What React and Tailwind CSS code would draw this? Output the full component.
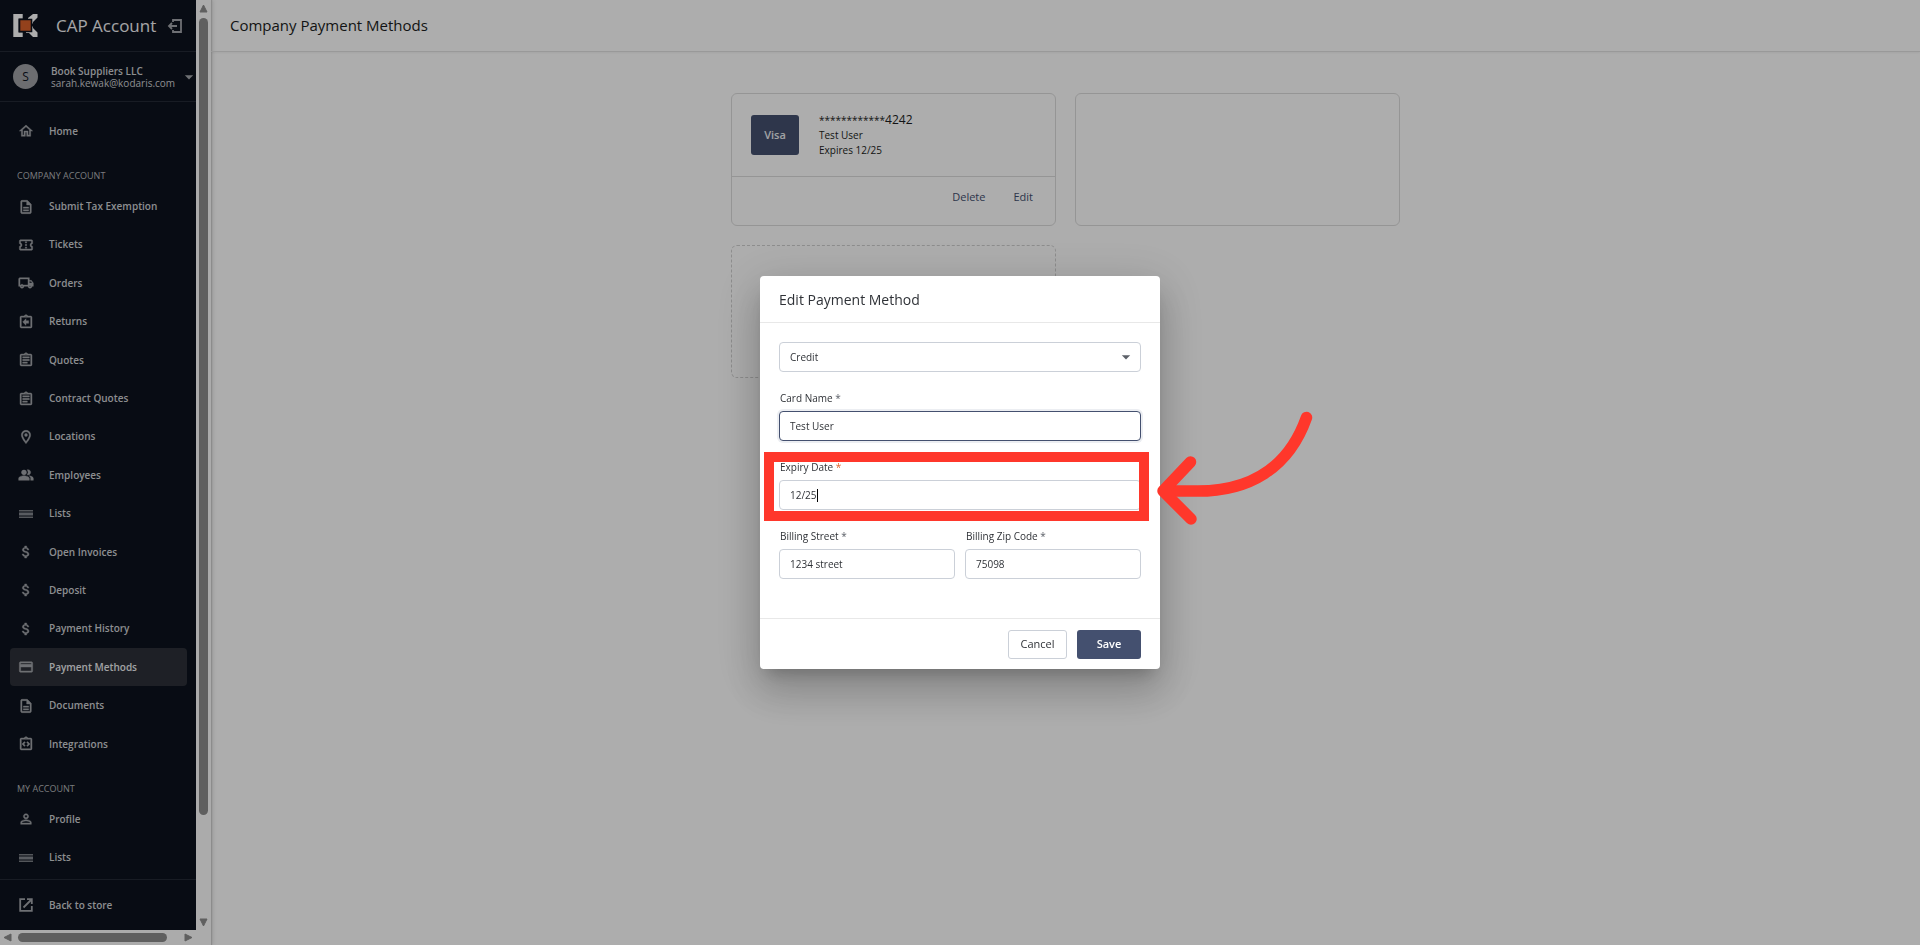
import React, { useState } from 'react';
import {
    MdOutlineHome, MdOutlineDescription, MdOutlineConfirmationNumber, MdOutlineLocalShipping, MdOutlineAssignmentReturn,
    MdOutlineAssignment, MdOutlineLocationOn, MdPeopleAlt, MdAttachMoney, MdOutlineCreditCard, MdOutlineIntegrationInstructions,
    MdPersonOutline, MdArrowDropDown,
} from 'react-icons/md';

const inputClass = "w-full h-[30px] px-[10px] rounded-[4px] bg-white border text-[10px] text-[#2f3237] focus:outline-none";
const inputBorder = "border-[#cbd0d8]";
const inputActiveBorder = "border-[#44506f] shadow-[0_0_0_2px_#eceef2]";

const ListIcon = ({ size = 16, className }) => (
    <svg width={size} height={size} viewBox="0 0 16 16" fill="currentColor" className={className}>
        <path d="M1 4h14v1.500H1zM1 10.500h14V12H1z" fillOpacity="0.75" />
        <path d="M1 6.500h14v3H1z" fillOpacity="0.8" />
    </svg>
);

const StoreIcon = ({ size = 16, className }) => (
    <svg width={size} height={size} viewBox="0 0 16 16" fill="none" stroke="currentColor" strokeWidth="1.8" className={className}>
        <path d="M7 2.2H2.2v11.6h11.6V9" />
        <path d="M9 2.2h4.8V7M13.5 2.5L5.5 10.5" />
    </svg>
);

const LogoutIcon = () => (
    <svg width="16" height="16" viewBox="0 0 16 16" fill="none" stroke="currentColor" strokeWidth="1.8">
        <path d="M6 4V2h8v12H6v-2" />
        <path d="M10 8H2M5 5L2 8l3 3" />
    </svg>
);

const Logo = () => (
    <svg width="26" height="26" viewBox="0 0 26 26">
        <path d="M1.300 1h9.400v4.500H6.500v14h4.200V24H1.300z" fill="#fff" />
        <path d="M21 1h4.500v3.500l-4.500 4.500v1.500h-2l-3-4V5zM21 24h4.500v-4.500l-4.500-4.500v-1.500h-2l-5 5V20h3z" fill="#fff" />
        <path d="M7.500 6.500h12v12h-12z" fill="#d9602a" stroke="#0d131e" strokeWidth="1.600" />
    </svg>
);

const navItems = [
    { label: 'Home', icon: MdOutlineHome },
    { heading: 'COMPANY ACCOUNT' },
    { label: 'Submit Tax Exemption', icon: MdOutlineDescription },
    { label: 'Tickets', icon: MdOutlineConfirmationNumber },
    { label: 'Orders', icon: MdOutlineLocalShipping },
    { label: 'Returns', icon: MdOutlineAssignmentReturn },
    { label: 'Quotes', icon: MdOutlineAssignment },
    { label: 'Contract Quotes', icon: MdOutlineAssignment },
    { label: 'Locations', icon: MdOutlineLocationOn },
    { label: 'Employees', icon: MdPeopleAlt },
    { label: 'Lists', icon: ListIcon },
    { label: 'Open Invoices', icon: MdAttachMoney },
    { label: 'Deposit', icon: MdAttachMoney },
    { label: 'Payment History', icon: MdAttachMoney },
    { label: 'Payment Methods', icon: MdOutlineCreditCard, active: true },
    { label: 'Documents', icon: MdOutlineDescription },
    { label: 'Integrations', icon: MdOutlineIntegrationInstructions },
    { heading: 'MY ACCOUNT' },
    { label: 'Profile', icon: MdPersonOutline },
    { label: 'Lists', icon: ListIcon },
];

const NavLink = ({ label, icon: Icon, active }) => (
    <a
        href="#"
        className={`flex flex-1 items-center ml-[10px] mr-[9px] pl-2 gap-[15px] rounded-[4px] text-[10px] font-semibold ${active ? 'bg-[#2d3038] text-[#eceef1]' : 'text-[#cfd1d5]'}`}
    >
        {/* a thin stroke on top of the fill gives the heavier icon weight */}
        <Icon size={16} className={`shrink-0 text-[#a3a6ab] ${Icon === ListIcon || Icon === StoreIcon ? '' : '[&_path:not([fill=none])]:stroke-[0.6]'}`} />
        <span className="whitespace-nowrap">{label}</span>
    </a>
);

const ScrollArrow = ({ points }) => (
    <svg width="9" height="9" viewBox="0 0 9 9" fill="#8d8d8d" stroke="#8d8d8d" strokeLinejoin="round" className="shrink-0">
        <polygon points={points} />
    </svg>
);

const Sidebar = () => (
    <aside className="flex w-[211px] shrink-0 bg-[#fdfdfd] shadow-[1px_0_1px_#cfcfcf,2px_0_4px_rgba(0,0,0,0.12)]">
        <div className="flex flex-col w-[196px] shrink-0">
            <div className="flex flex-col flex-1 min-h-0 bg-[#0d131e]">
                <div className="flex items-center h-[52px] pl-3 pr-[13px] border-b border-[#242a35]">
                    <Logo />
                    <span className="ml-[18px] text-[17px] text-[#f3f4f6] whitespace-nowrap">CAP Account</span>
                    <button type="button" aria-label="Log out" className="ml-auto text-[#a3a6ab]"><LogoutIcon /></button>
                </div>
                <button type="button" className="flex items-center h-[50px] pl-[13px] border-b border-[#242a35] text-left">
                    <span className="flex items-center justify-center size-[25px] shrink-0 rounded-full bg-[#9fa1a5] text-xs text-[#0d131e]">S</span>
                    <span className="flex-1 ml-[13px] text-[10px] leading-[12px] text-[#cfd1d5]">
                        <span className="block font-semibold">Book Suppliers LLC</span>
                        <span className="block">sarah.kewak@kodaris.com</span>
                    </span>
                    <MdArrowDropDown size={20} className="-mr-[3px] shrink-0 text-[#a3a6ab]" />
                </button>
                <nav className="flex flex-1 flex-col min-h-0 pt-[10px] pb-[2px]">
                    <ul className="flex flex-1 flex-col">
                        {navItems.map((item, i) => (item.heading ? (
                            <li key={i} className="flex items-center h-[37px] pt-[13px] pl-[17px] text-[9px] text-[#b4b6ba]">{item.heading}</li>
                        ) : (
                            <li key={i} className="flex flex-1"><NavLink {...item} /></li>
                        )))}
                    </ul>
                </nav>
                <div className="flex h-[51px] border-t border-[#242a35]">
                    <NavLink label="Back to store" icon={StoreIcon} />
                </div>
            </div>
            {/* horizontal scrollbar */}
            <div className="flex items-center justify-between h-[15px] px-[3px]" aria-hidden="true">
                <ScrollArrow points="1,4.5 8,1 8,8" />
                <div className="flex flex-1 mx-[6px]"><div className="h-[9px] w-[93%] rounded-full bg-[#8d8d8d]" /></div>
                <ScrollArrow points="8,4.5 1,1 1,8" />
            </div>
        </div>
        {/* vertical scrollbar */}
        <div className="flex flex-col items-center flex-1 pt-1 pb-[18px]" aria-hidden="true">
            <ScrollArrow points="4.5,1 1,8 8,8" />
            <div className="flex-1 my-[5px]"><div className="w-[9px] h-[89%] rounded-full bg-[#8d8d8d]" /></div>
            <ScrollArrow points="4.5,8 1,1 8,1" />
        </div>
    </aside>
);

const Field = ({ id, label, value, onChange, active = false, starClass = 'text-[#5c6068]', children }) => (
    <div className="relative flex-1">
        <label htmlFor={id} className="block mb-[5px] pl-px text-[10px] leading-[16px] text-[#2f3237]">
            {label} <span className={starClass}>*</span>
        </label>
        <input id={id} name={id} type="text" value={value} onChange={onChange} className={`${inputClass} ${active ? inputActiveBorder : inputBorder}`} />
        {children}
    </div>
);

const EditPaymentDialog = () => {
    const [form, setForm] = useState({ type: 'Credit', cardName: 'Test User', expiry: '12/25', street: '1234 street', zip: '75098' });

    const handleChange = (e) => {
        const { name, value } = e.target;
        setForm(prev => ({ ...prev, [name]: value }));
    };

    return (
        <div className="fixed inset-0 flex items-center justify-center bg-black/32">
            <form
                role="dialog"
                aria-label="Edit Payment Method"
                onSubmit={(e) => e.preventDefault()}
                className="relative w-[400px] rounded-[4px] bg-white shadow-[0_11px_15px_-7px_rgba(0,0,0,0.2),0_24px_38px_3px_rgba(0,0,0,0.14),0_9px_46px_8px_rgba(0,0,0,0.12)]"
            >
                <h2 className="flex items-center h-[47px] px-[19px] border-b border-[#e8e8e8] text-[14px] text-[#2f3237]">Edit Payment Method</h2>
                <div className="flex flex-col gap-[18px] px-[19px] pt-[19px] pb-[39px]">
                    <div className="relative">
                        <select name="type" aria-label="Payment type" value={form.type} onChange={handleChange} className={`${inputClass} ${inputBorder} appearance-none`}>
                            <option>Credit</option>
                            <option>ACH</option>
                        </select>
                        <MdArrowDropDown size={20} className="absolute right-[5px] top-[5px] text-[#5c6068] pointer-events-none" />
                    </div>
                    <Field id="cardName" label="Card Name" value={form.cardName} onChange={handleChange} active />
                    <Field id="expiry" label="Expiry Date" value={form.expiry} onChange={handleChange} starClass="text-[#e0622a]">
                        <span className="absolute left-[38px] bottom-[8px] w-px h-[13px] bg-black" />
                        <div className="absolute -left-[15px] -right-[8px] -top-[7px] -bottom-[11px] border-[10px] border-[#ff372b]" />
                    </Field>
                    <div className="flex gap-[10px]">
                        <Field id="street" label="Billing Street" value={form.street} onChange={handleChange} />
                        <Field id="zip" label="Billing Zip Code" value={form.zip} onChange={handleChange} />
                    </div>
                </div>
                <div className="flex justify-end gap-[10px] px-[19px] pt-[11px] pb-[10px] border-t border-[#e8e8e8] text-[11px]">
                    <button type="button" className="w-[59px] h-[29px] rounded-[3px] border border-[#cbd0d8] text-[#2f3237]">Cancel</button>
                    <button type="submit" className="w-[64px] h-[29px] rounded-[3px] bg-[#44506f] font-semibold text-white">Save</button>
                </div>
                {/* arrow pointing at the expiry date */}
                <svg width="160" height="124" viewBox="0 0 160 124" fill="none" stroke="#ff372b" strokeWidth="11.500" strokeLinecap="round" strokeLinejoin="round" className="absolute left-[396px] top-[130px]">
                    <path d="M150.500 11.500C133 61 94 87 35 85H10" />
                    <path d="M34.500 56L7 85l28 28" />
                </svg>
            </form>
        </div>
    );
};

const App = () => (
    <div className="flex h-screen bg-white font-['Open_Sans','Noto_Sans',sans-serif]">
        <Sidebar />
        <div className="flex-1 min-w-0">
            <header className="flex items-center h-[52px] px-[19px] border-b border-[#e2e2e2] shadow-xs">
                <h1 className="text-[15px] text-[#1b1d21]">Company Payment Methods</h1>
            </header>
            <main className="grid grid-cols-2 gap-[19px] max-w-[669px] mx-auto mt-[41px]">
                <section className="h-[133px] rounded-[6px] border border-[#dcdcdc]">
                    <div className="flex items-center gap-5 h-[83px] pl-[19px] border-b border-[#dcdcdc]">
                        <div className="flex items-center justify-center w-12 h-10 rounded-[3px] bg-[#44506f] text-[11px] font-semibold text-[#eceef1]">Visa</div>
                        <div className="text-[10px] leading-[15px] text-[#1b1d21]">
                            <p>************<span className="text-[12px] font-medium">4242</span></p>
                            <p>Test User</p>
                            <p>Expires 12/25</p>
                        </div>
                    </div>
                    <div className="flex justify-end gap-7 pt-3 pr-[22px] text-[11px] leading-[15px] text-[#44506f]">
                        <button type="button">Delete</button>
                        <button type="button">Edit</button>
                    </div>
                </section>
                <section className="rounded-[6px] border border-[#dcdcdc]" />
                <section className="h-[133px] rounded-[6px] border border-dashed border-[#d0d0d0]" />
            </main>
        </div>
        <EditPaymentDialog />
    </div>
);

export default App;
